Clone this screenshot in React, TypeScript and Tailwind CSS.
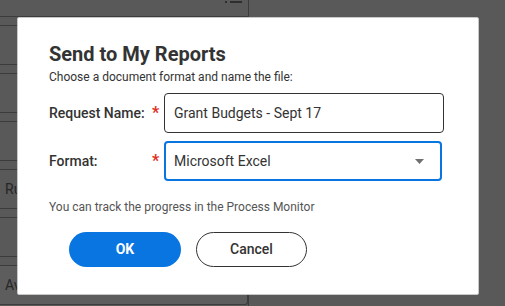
import React from 'react';

const rows = ['', '', '', 'Ru', '', 'Av'];

function BackdropPage() {
  return (
    <div className="flex h-full">
      <div className="relative flex w-[249px] flex-col border-r border-[#3c3c3c]">
        <div className="h-[17px] border-b border-[#3c3c3c]">
          <div className="flex items-start gap-[3px] pl-[225px]">
            <span className="mt-[1px] h-[2px] w-[2px] bg-[#2e2e2e]" />
            <span className="mt-[1px] h-[2px] w-[12px] bg-[#2e2e2e]" />
          </div>
        </div>
        {rows.map((label, i) => (
          <React.Fragment key={i}>
            <div className="h-[9px] border-b border-[#3c3c3c]" />
            <div
              className={`flex h-[39px] items-center border-b border-[#3c3c3c] pl-[5px] text-[14px] text-[#262626] ${
                i === 5 ? 'rounded-br-[3px] border-r bg-[#5d5d5d]' : ''
              }`}
            >
              {label}
            </div>
          </React.Fragment>
        ))}
      </div>
    </div>
  );
}

export default function App() {
  return (
    <div
      className="relative h-[306px] w-[505px] overflow-hidden bg-[#595959]"
      style={{ fontFamily: 'Roboto, "Liberation Sans", sans-serif' }}
    >
      <BackdropPage />

      {/* Dialog */}
      <div className="absolute left-[17px] top-[17px] h-[278px] w-[462px] rounded-[2px] border border-[#c8c8c8] bg-white pl-[31px] pt-[24px]">
        <h2 className="text-[20px] font-bold leading-[24px] text-[#333333]">Send to My Reports</h2>
        <p className="mt-[3px] text-[12px] leading-[16px] text-[#333333]">
          Choose a document format and name the file:
        </p>

        <div className="mt-[8px] flex items-center">
          <label className="w-[103px] text-[14px] font-medium text-[#333333]">Request Name:</label>
          <span className="w-[12px] text-[16px] font-bold leading-none text-[#de2e21]">*</span>
          <div className="flex h-[40px] w-[280px] items-center rounded-[4px] border border-[#333333] pl-[9px] text-[14px] text-[#333333]">
            Grant Budgets - Sept 17
          </div>
        </div>

        <div className="mt-[8px] flex items-center">
          <label className="w-[103px] text-[14px] font-medium text-[#333333]">Format:</label>
          <span className="w-[12px] text-[16px] font-bold leading-none text-[#de2e21]">*</span>
          <div className="flex h-[40px] w-[278px] items-center justify-between rounded-[4px] border-2 border-[#0875e1] pl-[8px] pr-[16px] text-[14px] text-[#333333]">
            <span>Microsoft Excel</span>
            <svg width="9" height="5" viewBox="0 0 9 5">
              <path d="M0 0h9L4.5 5z" fill="#707070" />
            </svg>
          </div>
        </div>

        <p className="mt-[18px] text-[12px] leading-[16px] text-[#555555]">
          You can track the progress in the Process Monitor
        </p>

        <div className="mt-[17px] flex gap-[15px] pl-[20px]">
          <button className="h-[35px] w-[112px] rounded-full bg-[#0875e1] text-[14px] font-bold text-white">
            OK
          </button>
          <button className="h-[35px] w-[111px] rounded-full border border-[#333333] bg-white text-[14px] font-medium text-[#333333]">
            Cancel
          </button>
        </div>
      </div>
    </div>
  );
}
